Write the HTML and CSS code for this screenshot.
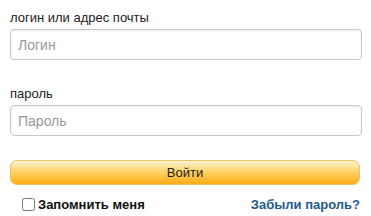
FILE: index.html
```html
<!DOCTYPE html>
<html lang="ru">
<head>
    <meta charset="UTF-8">
    <title>Вход</title>
    <link rel="stylesheet" href="styles.css">
</head>
<body>
    <form class="login-form">
        <label class="field-label" for="login">логин или адрес почты</label>
        <input class="field-input" type="text" id="login" placeholder="Логин">

        <label class="field-label second" for="password">пароль</label>
        <input class="field-input" type="password" id="password" placeholder="Пароль">

        <button class="submit-btn" type="button">Войти</button>

        <div class="form-bottom">
            <label class="remember">
                <input type="checkbox" class="remember-box">
                <span>Запомнить меня</span>
            </label>
            <a class="forgot" href="#">Забыли пароль?</a>
        </div>
    </form>
</body>
</html>
```

FILE: styles.css
```css
body {
    margin: 0;
    background-color: #fff;
    font-family: Arial, "Liberation Sans", sans-serif;
    font-size: 13px;
    color: #222;
}

.login-form {
    display: flex;
    flex-direction: column;
    padding: 10px 9px 0 10px;
}

.field-label {
    display: block;
    line-height: 15px;
    margin-bottom: 4px;
}

.field-label.second {
    margin-top: 26px;
}

.field-input {
    box-sizing: border-box;
    height: 31px;
    width: 100%;
    padding: 0 7px;
    border: 1px solid #c8c8c8;
    border-radius: 4px;
    box-shadow: inset 0 1px 2px rgba(0, 0, 0, 0.08);
    font-family: Arial, "Liberation Sans", sans-serif;
    font-size: 14px;
    color: #333;
    outline: none;
}

.field-input::placeholder {
    color: #999;
}

.submit-btn {
    box-sizing: border-box;
    height: 25px;
    width: 350px;
    margin-top: 24px;
    border: 1px solid #f0c060;
    border-radius: 7px;
    background: linear-gradient(to bottom, #fff4d6 0%, #fed46a 45%, #fcab14 100%);
    font-family: Arial, "Liberation Sans", sans-serif;
    font-size: 13px;
    color: #222;
    cursor: pointer;
}

.form-bottom {
    display: flex;
    justify-content: space-between;
    align-items: center;
    margin-top: 12px;
    padding: 0 2px 0 12px;
}

.remember {
    display: flex;
    align-items: center;
    gap: 3px;
    font-weight: bold;
    color: #111;
}

.remember-box {
    margin: 0;
    width: 13px;
    height: 13px;
}

.forgot {
    font-weight: bold;
    color: #1e5d8c;
    text-decoration: none;
}
```
